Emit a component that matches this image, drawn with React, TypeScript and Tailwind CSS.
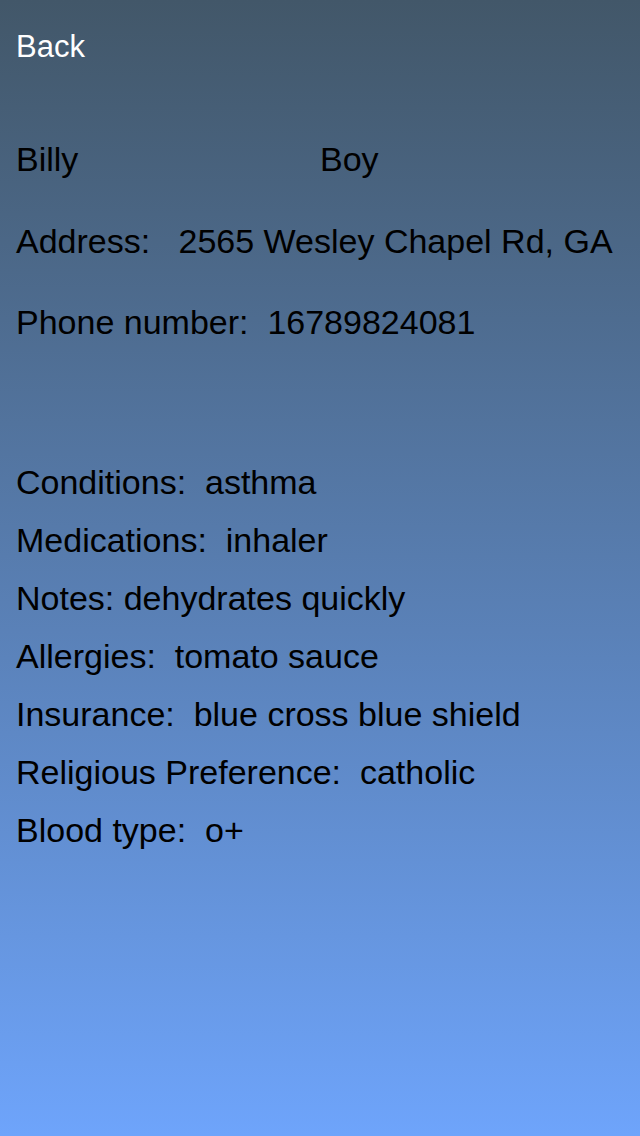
const rows: [string, string][] = [
  ['Conditions:', 'asthma'],
  ['Medications:', 'inhaler'],
  ['Notes:', 'dehydrates quickly'],
  ['Allergies:', 'tomato sauce'],
  ['Insurance:', 'blue cross blue shield'],
  ['Religious Preference:', 'catholic'],
  ['Blood type:', 'o+'],
];

const App: React.FC = () => {
  return (
    <div
      className="w-[640px] h-[1136px] overflow-hidden bg-gradient-to-b from-[#425769] to-[#6ea4fb] text-black text-[34px] whitespace-pre"
      style={{ fontFamily: '"Liberation Sans", Arial, sans-serif' }}
    >
      <div className="mt-[28px] pl-4 leading-[38px] text-[31px] text-white">Back</div>

      <div className="mt-[74px] flex leading-[38px]">
        <div className="w-[320px] pl-4">Billy</div>
        <div>Boy</div>
      </div>

      <div className="mt-[44px] pl-4 leading-[38px]">Address:   2565 Wesley Chapel Rd, GA</div>
      <div className="mt-[43px] pl-4 leading-[38px]">Phone number:  16789824081</div>

      <div className="mt-[112px] pl-4 flex flex-col">
        {rows.map(([label, value]) => (
          <div key={label} className="leading-[58px]">
            {label === 'Notes:' ? `${label} ${value}` : `${label}  ${value}`}
          </div>
        ))}
      </div>
    </div>
  );
};

export default App;
